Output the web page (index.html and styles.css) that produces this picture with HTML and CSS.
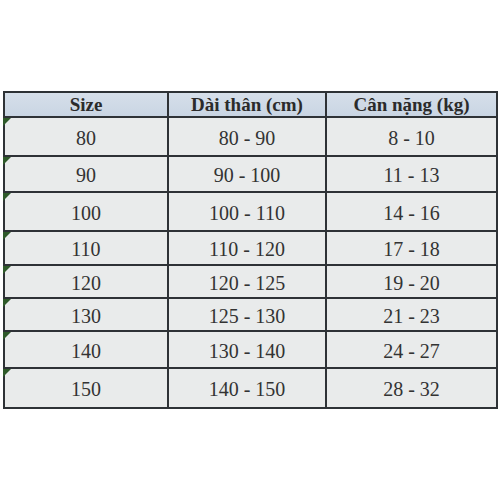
FILE: index.html
```html
<!DOCTYPE html>
<html lang="vi">
<head>
<meta charset="utf-8">
<link rel="stylesheet" href="styles.css">
</head>
<body>
<div class="page">
  <div class="size-table">
    <div class="cell head">Size</div>
    <div class="cell head">Dài thân (cm)</div>
    <div class="cell head">Cân nặng (kg)</div>

    <div class="cell first">80</div><div class="cell">80 - 90</div><div class="cell">8 - 10</div>
    <div class="cell first">90</div><div class="cell">90 - 100</div><div class="cell">11 - 13</div>
    <div class="cell first">100</div><div class="cell">100 - 110</div><div class="cell">14 - 16</div>
    <div class="cell first">110</div><div class="cell">110 - 120</div><div class="cell">17 - 18</div>
    <div class="cell first">120</div><div class="cell">120 - 125</div><div class="cell">19 - 20</div>
    <div class="cell first">130</div><div class="cell">125 - 130</div><div class="cell">21 - 23</div>
    <div class="cell first">140</div><div class="cell">130 - 140</div><div class="cell">24 - 27</div>
    <div class="cell first">150</div><div class="cell">140 - 150</div><div class="cell">28 - 32</div>
  </div>
</div>
</body>
</html>
```

FILE: styles.css
```css
html, body {
  margin: 0;
  padding: 0;
  background: #ffffff;
}

.page {
  padding: 91px 0 0 3px;
}

.size-table {
  width: 495px;
  box-sizing: border-box;
  display: grid;
  grid-template-columns: 162px 156px 169px;
  grid-template-rows: 23px 37px 34px 37px 32px 31px 31px 35px 38px;
  gap: 2px;
  padding: 2px;
  background: #2e3236;
  font-family: "Liberation Serif", "Times New Roman", serif;
}

.cell {
  position: relative;
  display: flex;
  align-items: center;
  justify-content: center;
  background: #e9ebeb;
  color: #333333;
  font-size: 20px;
  padding-top: 3px;
  box-sizing: border-box;
}

.head {
  background: linear-gradient(#d6dfea, #c9d5e3);
  color: #2b2b2b;
  font-weight: bold;
  font-size: 19px;
  padding-top: 0;
}

.first::before {
  content: "";
  position: absolute;
  left: -2px;
  top: 0;
  width: 0;
  height: 0;
  border-top: 8px solid #2f5a2a;
  border-right: 8px solid transparent;
}
```
